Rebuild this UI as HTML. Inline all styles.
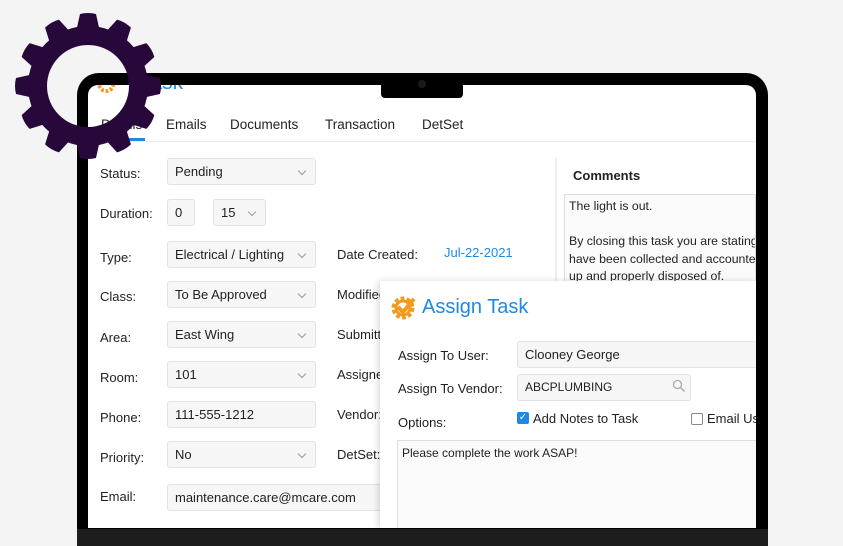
<!DOCTYPE html>
<html><head><meta charset="utf-8"><style>
*{margin:0;padding:0;box-sizing:border-box}
html,body{width:843px;height:546px}
body{background:#f4f4f4;position:relative;overflow:hidden;font-family:"Liberation Sans",sans-serif;color:#222;font-size:13px}
.a{position:absolute}
.lap{left:77px;top:73px;width:691px;height:456px;background:#000;border-radius:22px 22px 0 0}
.scr{left:88px;top:85px;width:668px;height:443px;background:#fff;border-radius:10px 10px 0 0;overflow:hidden}
.base{left:77px;top:529px;width:691px;height:17px;background:#1d1d1d}
.notch{left:381px;top:73px;width:82px;height:25px;background:#000;border-radius:0 0 4px 4px}
.lbl{font-size:13px;color:#222;white-space:nowrap}
.in{background:#f6f6f6;border:1px solid #e2e2e2;border-radius:3px;height:27px;font-size:13px;padding:5px 7px;color:#222;white-space:nowrap}
.dd::after{content:"";position:absolute;right:10px;top:9px;width:5px;height:5px;border-right:1px solid #999;border-bottom:1px solid #999;transform:rotate(45deg)}
.tab{font-size:13.5px;color:#222;top:117px}
</style></head><body>
<div class="a lap"></div>
<div class="a scr"><div class="a" style="left:52px;top:-14px;font-size:21px;color:#1e88e5">Task</div><svg class="a" style="left:8px;top:-12px" width="22" height="22" viewBox="0 0 28 28"><circle cx="13" cy="14" r="9" fill="none" stroke="#f39a1e" stroke-width="5" stroke-dasharray="3.5 2.2"/></svg></div>
<div class="a notch"></div>
<div class="a" style="left:418px;top:80px;width:8px;height:8px;border-radius:50%;background:#1a1a1a"></div>
<div class="a base"></div>

<div class="a tab" style="left:101px">Details</div>
<div class="a" style="left:100px;top:138px;width:45px;height:3px;background:#1e88e5"></div>
<div class="a tab" style="left:166px">Emails</div>
<div class="a tab" style="left:230px">Documents</div>
<div class="a tab" style="left:325px">Transaction</div>
<div class="a tab" style="left:422px">DetSet</div>
<div class="a" style="left:88px;top:141px;width:668px;height:1px;background:#eee"></div>
<div class="a" style="left:555px;top:158px;width:2px;height:130px;background:#eee"></div>

<div class="a lbl" style="left:100px;top:166px">Status:</div>
<div class="a in dd" style="left:167px;top:158px;width:149px">Pending</div>
<div class="a lbl" style="left:100px;top:206px">Duration:</div>
<div class="a in" style="left:167px;top:199px;width:28px">0</div>
<div class="a in dd" style="left:213px;top:199px;width:53px">15</div>
<div class="a lbl" style="left:100px;top:250px">Type:</div>
<div class="a in dd" style="left:167px;top:241px;width:149px">Electrical / Lighting</div>
<div class="a lbl" style="left:100px;top:289px">Class:</div>
<div class="a in dd" style="left:167px;top:281px;width:149px">To Be Approved</div>
<div class="a lbl" style="left:100px;top:330px">Area:</div>
<div class="a in dd" style="left:167px;top:321px;width:149px">East Wing</div>
<div class="a lbl" style="left:100px;top:370px">Room:</div>
<div class="a in dd" style="left:167px;top:361px;width:149px">101</div>
<div class="a lbl" style="left:100px;top:410px">Phone:</div>
<div class="a in" style="left:167px;top:401px;width:149px">111-555-1212</div>
<div class="a lbl" style="left:100px;top:450px">Priority:</div>
<div class="a in dd" style="left:167px;top:441px;width:149px">No</div>
<div class="a lbl" style="left:100px;top:489px">Email:</div>
<div class="a in" style="left:167px;top:484px;width:230px">maintenance.care@mcare.com</div>

<div class="a lbl" style="left:337px;top:247px">Date Created:</div>
<div class="a lbl" style="left:444px;top:245px;color:#1e88e5">Jul-22-2021</div>
<div class="a lbl" style="left:337px;top:287px">Modified:</div>
<div class="a lbl" style="left:337px;top:327px">Submitted:</div>
<div class="a lbl" style="left:337px;top:367px">Assigned:</div>
<div class="a lbl" style="left:337px;top:407px">Vendor:</div>
<div class="a lbl" style="left:337px;top:447px">DetSet:</div>

<div class="a" style="left:573px;top:168px;font-size:13px;font-weight:bold">Comments</div>
<div class="a" style="left:564px;top:194px;width:192px;height:100px;border:1px solid #ddd;background:#fafafa;font-size:12.3px;line-height:17.5px;padding:3px 4px;white-space:nowrap;overflow:hidden">The light is out.<br><br>By closing this task you are stating<br>have been collected and accounted<br>up and properly disposed of.</div>

<div class="a" style="left:380px;top:281px;width:376px;height:247px;background:#fff;box-shadow:-2px 0 6px rgba(0,0,0,.15);overflow:hidden">
<svg class="a" style="left:10px;top:13px" width="28" height="28" viewBox="0 0 28 28"><circle cx="13" cy="14" r="9" fill="none" stroke="#f39a1e" stroke-width="5" stroke-dasharray="3.5 2.2"/><circle cx="13" cy="14" r="7" fill="none" stroke="#f39a1e" stroke-width="3"/><path d="M8 13l5 5 11-13" fill="none" stroke="#f39a1e" stroke-width="4"/></svg>
<div class="a" style="left:42px;top:15px;font-size:20px;color:#1e88e5">Assign Task</div>
<div class="a lbl" style="left:18px;top:67px">Assign To User:</div>
<div class="a in" style="left:137px;top:60px;width:250px">Clooney George</div>
<div class="a lbl" style="left:18px;top:100px">Assign To Vendor:</div>
<div class="a in" style="left:137px;top:93px;width:174px;font-size:12px">ABCPLUMBING</div>
<svg class="a" style="left:292px;top:98px" width="14" height="14"><circle cx="5.5" cy="5.5" r="4" fill="none" stroke="#aaa" stroke-width="1.3"/><path d="M8.5 8.5l4 4" stroke="#aaa" stroke-width="1.5"/></svg>
<div class="a lbl" style="left:18px;top:134px">Options:</div>
<div class="a" style="left:137px;top:131px;width:12px;height:12px;background:#1e88e5;border-radius:2px;color:#fff;font-size:10px;line-height:12px;text-align:center">✓</div>
<div class="a lbl" style="left:153px;top:130px">Add Notes to Task</div>
<div class="a" style="left:311px;top:132px;width:12px;height:12px;border:1px solid #888;border-radius:2px"></div>
<div class="a lbl" style="left:327px;top:130px">Email User</div>
<div class="a" style="left:17px;top:159px;width:380px;height:100px;border:1px solid #ddd;background:#fafafa;font-size:12px;padding:5px 4px">Please complete the work ASAP!</div>
</div>

<svg class="a" style="left:10px;top:8px" width="156" height="156" viewBox="-78 -78 156 156">
<defs><mask id="m"><rect x="-80" y="-80" width="160" height="160" fill="#fff"/><circle r="41" fill="#000"/></mask></defs>
<g fill="#28083a" mask="url(#m)">
<circle r="60"/>
<g id="t"><path d="M-8 -72 Q0 -74 8 -72 L12 -54 L-12 -54Z"/></g>
<use href="#t" transform="rotate(30)"/><use href="#t" transform="rotate(60)"/><use href="#t" transform="rotate(90)"/><use href="#t" transform="rotate(120)"/><use href="#t" transform="rotate(150)"/><use href="#t" transform="rotate(180)"/><use href="#t" transform="rotate(210)"/><use href="#t" transform="rotate(240)"/><use href="#t" transform="rotate(270)"/><use href="#t" transform="rotate(300)"/><use href="#t" transform="rotate(330)"/>
</g>
</svg>
</body></html>
